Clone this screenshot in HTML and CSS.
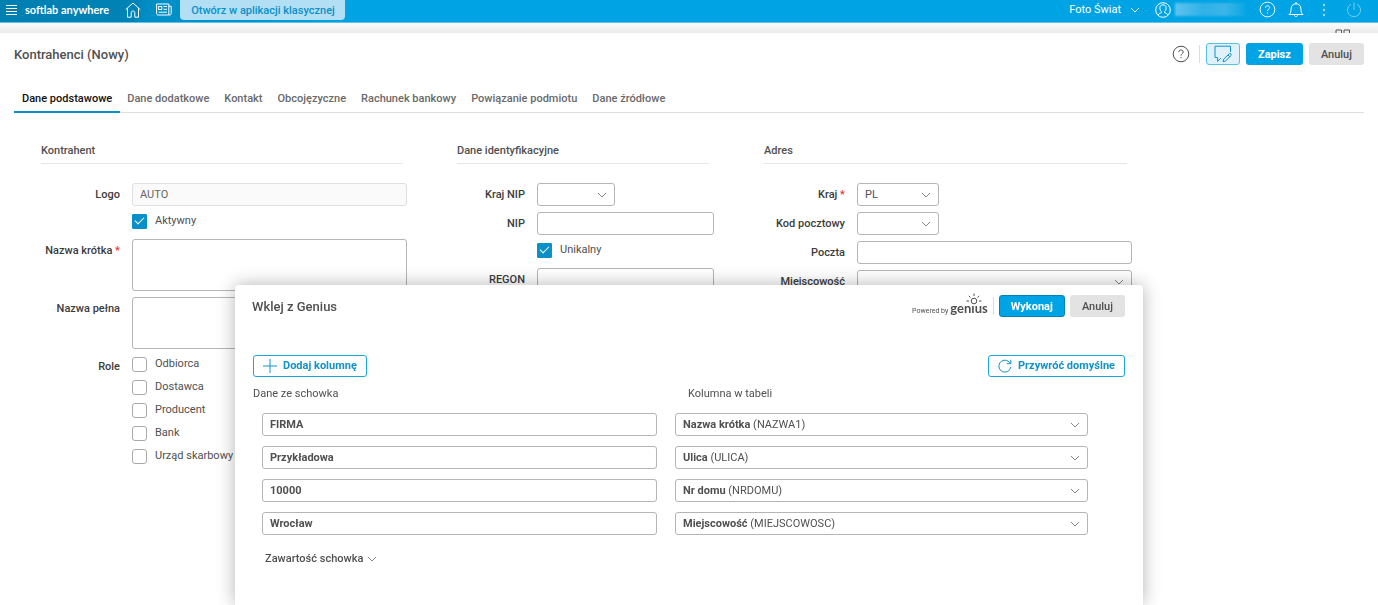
FILE: index.html
```html
<!DOCTYPE html>
<html lang="pl">
<head>
  <meta charset="UTF-8">
  <meta name="viewport" content="width=device-width, initial-scale=1.0">
  <title>Kontrahenci (Nowy)</title>
  <link rel="stylesheet" href="styles.css">
</head>
<body>
  <svg class="sprite" aria-hidden="true">
    <symbol id="chevron" viewBox="0 0 10 6"><path d="M1 1l4 4 4-4"/></symbol>
    <symbol id="help" viewBox="0 0 18 18"><circle cx="9" cy="9" r="7.8"/><path d="M6.8 7.2c0-1.4 1-2.2 2.2-2.2s2.2.8 2.2 2c0 1.6-2.2 1.8-2.2 3.6M9 12v1.2"/></symbol>
  </svg>

  <header class="topbar">
    <button class="icon-btn" aria-label="Menu">
      <svg width="12" height="12" viewBox="0 0 12 12"><path d="M0 1.5h11M0 4.5h11M0 7.5h11M0 10.5h11"/></svg>
    </button>
    <span class="brand">softlab anywhere</span>
    <button class="icon-btn home" aria-label="Start">
      <svg width="16" height="16" viewBox="0 0 16 16"><path d="M.7 7.6L8 1l7.3 6.6M2.5 6v9.2h3.7v-4.4c0-2.4 3.6-2.4 3.6 0v4.4h3.7V6"/></svg>
    </button>
    <button class="icon-btn news" aria-label="Aktualności">
      <svg width="16" height="13" viewBox="0 0 16 13"><path d="M.6 1h12.2v11H2.2C1.2 12 .6 11.4.6 10.4zM12.8 3.2h2.4v7.2c0 1-.6 1.6-1.4 1.6h-1M2.6 3.5h3.2v3H2.6zM7.4 3.5H11M7.4 6.3H11M2.6 9.2H11"/></svg>
    </button>
    <a class="classic-link" href="#">Otwórz w aplikacji klasycznej</a>

    <div class="topbar-right">
      <button class="company">Foto Świat <svg width="10" height="6"><use href="#chevron"/></svg></button>
      <button class="user" aria-label="Użytkownik">
        <svg width="16" height="16" viewBox="0 0 16 16"><circle cx="8" cy="8" r="7.3"/><path d="M3.2 13.2c.2-1.6 1.6-1.8 3.2-2.5V9.5C5.200 8.500 4.900 7.300 4.900 5.900c0-2 1.200-3.100 3.100-3.100s3.100 1.100 3.100 3.100c0 1.400-.3 2.600-1.500 3.600v1.200c1.600.7 3 .9 3.200 2.500"/></svg>
        <span class="user-name"></span>
      </button>
      <button class="icon-btn" aria-label="Pomoc"><svg width="17" height="17"><use href="#help" width="17" height="17"/></svg></button>
      <button class="icon-btn bell" aria-label="Powiadomienia">
        <svg width="16" height="17" viewBox="0 0 16 17"><path d="M1 13.500c1.800-1.400 2-3 2.100-5.500C3.200 4.800 4.800 2.800 8 2.800s4.800 2 4.900 5.200c.1 2.500.3 4.100 2.100 5.500zM8 2.800V1M6.300 13.800c.2 2.400 3.200 2.400 3.400 0"/></svg>
      </button>
      <button class="icon-btn dots" aria-label="Więcej">
        <svg width="4" height="14" viewBox="0 0 4 14"><circle cx="2" cy="2" r="1.200"/><circle cx="2" cy="7" r="1.200"/><circle cx="2" cy="12" r="1.200"/></svg>
      </button>
      <button class="icon-btn power" aria-label="Wyloguj">
        <svg width="16" height="16" viewBox="0 0 16 16"><path d="M5 2.200a6.600 6.600 0 1 0 6 0M8 .500V8"/></svg>
      </button>
    </div>
  </header>

  <div class="desk">
    <svg width="16" height="16" viewBox="0 0 16 16"><path d="M1 1h5.500v6H1zM9 1h5.500v6H9z"/></svg>
  </div>

  <main class="panel">
    <div class="panel-head">
      <h1>Kontrahenci (Nowy)</h1>
      <div class="actions">
        <button class="icon-btn help-dark" aria-label="Pomoc"><svg width="18" height="18"><use href="#help"/></svg></button>
        <span class="divider"></span>
        <button class="btn-note" aria-label="Notatka">
          <svg width="18" height="18" viewBox="0 0 18 18"><path d="M16.500 7V1.200H1V12.500h2.600v4l3.200-3.400M9 16.800l.7-2.700 5.600-5.300c1.200-1 2.800.6 1.700 1.800l-5.500 5.400zM14 10l1.800 1.800"/></svg>
        </button>
        <button class="btn btn-primary">Zapisz</button>
        <button class="btn btn-grey">Anuluj</button>
      </div>
    </div>

    <nav class="tabs">
      <a class="active" href="#">Dane podstawowe</a>
      <a href="#">Dane dodatkowe</a>
      <a href="#">Kontakt</a>
      <a href="#">Obcojęzyczne</a>
      <a href="#">Rachunek bankowy</a>
      <a href="#">Powiązanie podmiotu</a>
      <a href="#">Dane źródłowe</a>
    </nav>

    <form class="form">
      <section class="group group-main">
        <h2>Kontrahent</h2>
        <div class="fields">
          <label for="logo">Logo</label>
          <input id="logo" type="text" value="AUTO" disabled>
          <label class="check solo"><input type="checkbox" checked> Aktywny</label>
          <label for="short">Nazwa krótka <em>*</em></label>
          <textarea id="short"></textarea>
          <label for="full">Nazwa pełna</label>
          <textarea id="full"></textarea>
          <span class="label" id="roles">Role</span>
          <div class="roles" role="group" aria-labelledby="roles">
            <label class="check"><input type="checkbox"> Odbiorca</label>
            <label class="check"><input type="checkbox"> Dostawca</label>
            <label class="check"><input type="checkbox"> Producent</label>
            <label class="check"><input type="checkbox"> Bank</label>
            <label class="check"><input type="checkbox"> Urząd skarbowy</label>
          </div>
        </div>
      </section>

      <section class="group group-ident">
        <h2>Dane identyfikacyjne</h2>
        <div class="fields">
          <label for="nip-country">Kraj NIP</label>
          <div class="select short">
            <select id="nip-country"><option></option></select>
            <svg width="10" height="6"><use href="#chevron"/></svg>
          </div>
          <label for="nip">NIP</label>
          <input id="nip" type="text">
          <label class="check solo"><input type="checkbox" checked> Unikalny</label>
          <label for="regon">REGON</label>
          <input id="regon" type="text">
        </div>
      </section>

      <section class="group group-address">
        <h2>Adres</h2>
        <div class="fields">
          <label for="country">Kraj <em>*</em></label>
          <div class="select short">
            <select id="country"><option>PL</option></select>
            <svg width="10" height="6"><use href="#chevron"/></svg>
          </div>
          <label for="zip">Kod pocztowy</label>
          <div class="select short">
            <select id="zip"><option></option></select>
            <svg width="10" height="6"><use href="#chevron"/></svg>
          </div>
          <label for="post">Poczta</label>
          <input id="post" type="text">
          <label for="city">Miejscowość</label>
          <div class="select">
            <select id="city"><option></option></select>
            <svg width="10" height="6"><use href="#chevron"/></svg>
          </div>
        </div>
      </section>
    </form>
  </main>

  <div class="dialog" role="dialog" aria-labelledby="dialog-title">
    <div class="dialog-head">
      <h2 id="dialog-title">Wklej z Genius</h2>
      <div class="actions">
        <span class="powered">Powered by</span>
        <span class="genius">genıus
          <svg width="18" height="14" viewBox="0 0 18 14"><circle cx="9" cy="8" r="2.800"/><path d="M9 .500v2.500M3.800 2.800l1.700 1.700M14.200 2.800l-1.700 1.700M1.500 8h2.500M14 8h2.500"/></svg>
        </span>
        <span class="divider"></span>
        <button class="btn btn-primary focus">Wykonaj</button>
        <button class="btn btn-grey">Anuluj</button>
      </div>
    </div>

    <div class="dialog-tools">
      <button class="btn btn-outline"><svg width="14" height="14" viewBox="0 0 14 14"><path d="M7 0v14M0 7h14"/></svg> Dodaj kolumnę</button>
      <button class="btn btn-outline"><svg width="14" height="14" viewBox="0 0 14 14"><path d="M12.800 8A6 6 0 1 1 11 2.800L12.600 4.500M12.800 .800v3.900H8.800"/></svg> Przywróć domyślne</button>
    </div>

    <div class="map-head">
      <span>Dane ze schowka</span>
      <span>Kolumna w tabeli</span>
    </div>
    <div class="map-rows">
      <input type="text" value="FIRMA" aria-label="Dane 1">
      <div class="select rich">
        <select aria-label="Kolumna 1"><option>Nazwa krótka (NAZWA1)</option></select>
        <span aria-hidden="true"><b>Nazwa krótka</b> (NAZWA1)</span>
        <svg width="10" height="6"><use href="#chevron"/></svg>
      </div>
      <input type="text" value="Przykładowa" aria-label="Dane 2">
      <div class="select rich">
        <select aria-label="Kolumna 2"><option>Ulica (ULICA)</option></select>
        <span aria-hidden="true"><b>Ulica</b> (ULICA)</span>
        <svg width="10" height="6"><use href="#chevron"/></svg>
      </div>
      <input type="text" value="10000" aria-label="Dane 3">
      <div class="select rich">
        <select aria-label="Kolumna 3"><option>Nr domu (NRDOMU)</option></select>
        <span aria-hidden="true"><b>Nr domu</b> (NRDOMU)</span>
        <svg width="10" height="6"><use href="#chevron"/></svg>
      </div>
      <input type="text" value="Wrocław" aria-label="Dane 4">
      <div class="select rich">
        <select aria-label="Kolumna 4"><option>Miejscowość (MIEJSCOWOSC)</option></select>
        <span aria-hidden="true"><b>Miejscowość</b> (MIEJSCOWOSC)</span>
        <svg width="10" height="6"><use href="#chevron"/></svg>
      </div>
    </div>
    <button class="clip-toggle">Zawartość schowka <svg width="10" height="6"><use href="#chevron"/></svg></button>
  </div>
</body>
</html>
```
FILE: styles.css
```css
* {
  margin: 0;
  padding: 0;
  box-sizing: border-box;
}

body {
  height: 100vh;
  display: flex;
  flex-direction: column;
  overflow: hidden;
  background: #fff;
  color: #505050;
  font-family: Roboto, sans-serif;
  font-size: 11px;
  line-height: 18px;
}

button, input, select, textarea {
  font: inherit;
  color: inherit;
}

button {
  border: none;
  background: none;
  cursor: pointer;
}

a {
  text-decoration: none;
}

svg {
  display: block;
  fill: none;
  stroke: currentColor;
}

.sprite {
  position: absolute;
  width: 0;
  height: 0;
}

/* top bar */
.topbar {
  display: flex;
  align-items: center;
  flex-shrink: 0;
  height: 23px;
  padding: 0 16px 3px 6px;
  background: linear-gradient(100deg, #007fb1 0, #0083b6 135px, #008ec4 146px, #0095cf 240px, #00a4e4 350px);
  border-bottom: 1px solid #5cc4ec;
  color: #fff;
}

.brand {
  margin-left: 7px;
  font-family: Lato, sans-serif;
  font-weight: 700;
}

.home {
  margin-left: 16px;
}

.news {
  margin: 0 8px 0 15px;
}

.classic-link {
  height: 20px;
  padding: 0 10px 0 11px;
  line-height: 21px;
  background: #b3dff4;
  border-radius: 0 0 4px 4px;
  color: #0a8fc8;
  font-weight: 500;
}

.topbar-right {
  display: flex;
  align-items: center;
  margin-left: auto;
}

.company, .user {
  display: flex;
  align-items: center;
}

.company {
  gap: 9px;
  margin-right: 15px;
  line-height: 20px;
}

.user {
  gap: 4px;
  margin-right: 14px;
}

.user-name {
  width: 70px;
  height: 13px;
  background: linear-gradient(90deg, #5fc3ee, #2fb1e7 40%, #3cb6e9 70%, #0ea7e4);
  filter: blur(1px);
}

.bell {
  margin-left: 12px;
}

.dots {
  margin: 0 20px 0 18px;
  opacity: 0.6;
}

.dots circle {
  fill: currentColor;
  stroke: none;
}

.power {
  opacity: 0.45;
}

/* strip of the desktop seen behind the panel */
.desk {
  display: flex;
  justify-content: flex-end;
  flex-shrink: 0;
  height: 10px;
  padding: 6px 27px 0 0;
  overflow: hidden;
  background: linear-gradient(#fbfbfb, #ebebeb);
  color: #555;
}

.panel {
  flex: 1;
  min-height: 0;
  padding: 9px 14px 0;
}

.panel-head {
  display: flex;
  align-items: center;
  justify-content: space-between;
  height: 24px;
}

.panel-head .actions {
  gap: 6px;
}

h1, h2 {
  font-size: 11px;
  font-weight: 500;
}

.panel-head h1,
.dialog-head h2 {
  padding-top: 2px;
  font-size: 13px;
}

.actions {
  display: flex;
  align-items: center;
  gap: 5px;
}

.help-dark {
  margin-right: 3px;
}

.divider {
  width: 1px;
  height: 18px;
  background: #ddd;
}

.btn {
  height: 22px;
  padding: 1px 12px 0;
  border-radius: 3px;
  font-weight: 700;
}

.btn-primary {
  background: #00a4e4;
  color: #fff;
}

.btn-primary.focus {
  border: 1px solid #0081b8;
  padding: 1px 11px 0;
}

.btn-grey {
  background: #e3e3e3;
  font-weight: 500;
}

.btn-outline {
  display: flex;
  align-items: center;
  gap: 6px;
  padding: 0 9px;
  border: 1px solid #1aa5df;
  color: #1193c9;
  line-height: 20px;
}

.btn-note {
  display: grid;
  place-items: center;
  width: 34px;
  height: 22px;
  border: 1px solid #56c0e9;
  border-radius: 3px;
  background: #dff1fa;
  color: #1193c9;
}

.tabs {
  display: flex;
  margin-top: 21px;
  border-bottom: 1px solid #ddd;
}

.tabs a {
  margin-bottom: -1px;
  padding: 3px 8px 3px 7px;
  border-bottom: 2px solid transparent;
  color: #6a6a6a;
  font-weight: 500;
}

.tabs .active {
  padding-left: 8px;
  border-color: #0a8fc8;
  color: #111;
}

/* form */
.form {
  display: grid;
  grid-template-columns: 366fr 257fr 368fr;
  gap: 50px;
  margin-top: 28px;
  padding: 0 232px 0 27px;
}

.group h2 {
  margin: 0 5px 19px 0;
  padding: 1px 0 3px;
  border-bottom: 1px solid #e6e6e6;
}

.fields {
  display: grid;
  grid-template-columns: 79px 1fr;
  gap: 6px 12px;
}

.group-ident .fields {
  grid-template-columns: 68px 1fr;
}

.group-address .fields {
  grid-template-columns: 81px 1fr;
}

.fields > label,
.label {
  line-height: 24px;
  height: 23px;
  font-weight: 500;
  color: #3c3c3c;
  text-align: right;
  white-space: nowrap;
}

.fields em {
  color: #e33;
  font-style: normal;
}

input[type="text"], select, textarea {
  display: block;
  width: 100%;
  height: 23px;
  padding: 0 7px;
  border: 1px solid #b5b5b5;
  border-radius: 3px;
  background: #fff;
}

input:disabled {
  border-color: #e0e0e0;
  background: #fafafa;
  color: #666;
}

textarea {
  height: 52px;
  resize: none;
}

.select {
  position: relative;
}

.select select {
  appearance: none;
}

.select svg {
  position: absolute;
  top: 9px;
  right: 8px;
  pointer-events: none;
}

.select svg,
.clip-toggle svg {
  color: #888;
}

.group-ident .short {
  width: 78px;
}

.group-address .short {
  width: 82px;
}

.fields .check {
  display: flex;
  align-items: center;
  gap: 8px;
  height: 18px;
  line-height: 20px;
  color: #505050;
  font-weight: 400;
}

.check.solo {
  grid-column: 2;
  margin-bottom: 3px;
}

.check input {
  display: grid;
  place-items: center;
  appearance: none;
  width: 15px;
  height: 15px;
  border: 1px solid #aaa;
  border-radius: 3px;
  background: #fff;
}

.check input:checked {
  border-color: #0a8fc8;
  border-radius: 1px;
  background: #0a8fc8;
}

.check input:checked::after {
  content: "";
  width: 8px;
  height: 4px;
  margin-bottom: 3px;
  border: solid #fff;
  border-width: 0 0 1px 1px;
  transform: rotate(-45deg);
}

.roles {
  display: grid;
  gap: 5px;
}

/* dialog over the form */
.dialog {
  position: fixed;
  inset: 285px 235px 0;
  padding: 10px 18px 0 17px;
  border-radius: 4px 4px 0 0;
  background: #fff;
  box-shadow: 0 0 18px rgba(0, 0, 0, 0.3);
}

.dialog-head,
.dialog-tools {
  display: flex;
  align-items: center;
  justify-content: space-between;
}

.powered {
  margin-right: -3px;
  padding-top: 9px;
  font-size: 7px;
  line-height: 8px;
}

.genius {
  position: relative;
  padding-top: 4px;
  font-family: Lato, sans-serif;
  font-size: 13px;
  font-weight: 700;
}

.genius svg {
  position: absolute;
  top: -2px;
  left: 15px;
}

.dialog-tools {
  margin: 38px 0 0 1px;
}

.map-head,
.map-rows {
  display: grid;
  column-gap: 18px;
  margin-left: 1px;
  padding-right: 37px;
}

.map-head {
  grid-template-columns: 404fr 413fr;
  margin-top: 8px;
}

.map-head span + span {
  padding-left: 13px;
}

.map-rows {
  grid-template-columns: 395fr 413fr;
  row-gap: 10px;
  margin-top: 10px;
  padding-left: 9px;
}

.map-rows input {
  font-weight: 700;
}

/* the closed select cannot mix weights, so its value is drawn by the span */
.rich select {
  color: transparent;
}

.rich option {
  color: #505050;
}

.rich span {
  position: absolute;
  top: 0;
  left: 8px;
  line-height: 23px;
  pointer-events: none;
}

.clip-toggle {
  display: flex;
  align-items: center;
  gap: 4px;
  margin: 15px 0 0 13px;
  font-weight: 500;
}
```
